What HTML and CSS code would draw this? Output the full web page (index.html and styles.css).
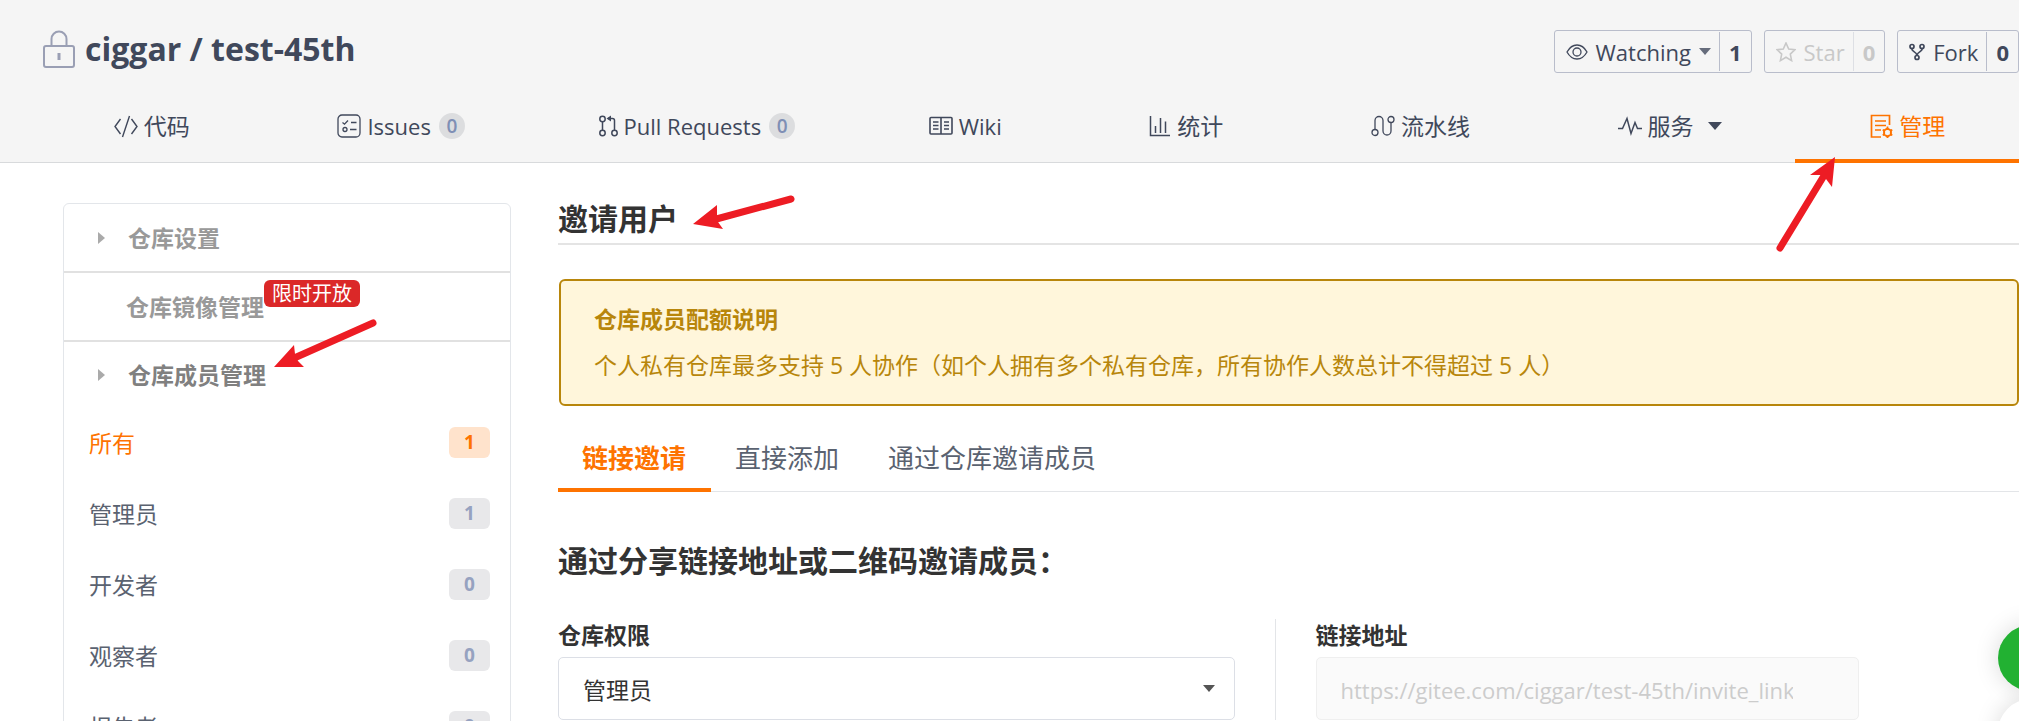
FILE: index.html
```html
<!DOCTYPE html>
<html lang="zh-CN">
<head>
<meta charset="utf-8">
<title>ciggar / test-45th</title>
<link rel="stylesheet" href="styles.css">
</head>
<body>
<header class="header">
  <div class="repo">
    <h1 class="repo-title">
      <svg class="lock" viewBox="0 0 32 38" fill="none" stroke="currentColor" stroke-width="2"><rect x="1" y="16" width="30" height="21" rx="2"/><path d="M8.500 16V9a7.500 7.500 0 0 1 15 0v7"/><path d="M16 23v7" stroke-width="3"/></svg>
      <span>ciggar / test-45th</span>
    </h1>
    <div class="actions">
      <div class="action">
        <button class="action-main" type="button">
          <svg class="icon-eye" viewBox="0 0 22 16" fill="none" stroke="currentColor" stroke-width="1.300"><path d="M1 8c2.500-4.500 6-7 10-7s7.500 2.500 10 7c-2.500 4.500-6 7-10 7S3.500 12.500 1 8z"/><circle cx="11" cy="8" r="4"/></svg>
          <span>Watching</span><i class="caret caret-soft"></i>
        </button>
        <a class="action-count" href="#">1</a>
      </div>
      <div class="action action-off">
        <button class="action-main" type="button" disabled>
          <svg class="icon-20" viewBox="0 0 20 20" fill="none" stroke="currentColor" stroke-width="1.600"><path d="M10 1l2.700 6 6.300.7-4.700 4.400 1.300 6.500L10 15.300l-5.600 3.300 1.300-6.500L1 7.700 7.300 7z"/></svg>
          <span>Star</span>
        </button>
        <a class="action-count" href="#">0</a>
      </div>
      <div class="action">
        <button class="action-main" type="button">
          <svg class="icon-fork" viewBox="0 0 16 18" fill="none" stroke="currentColor" stroke-width="1.700"><circle cx="3" cy="3.500" r="2"/><circle cx="13" cy="3.500" r="2"/><circle cx="8" cy="14.500" r="2"/><path d="M3 5.500v1c0 2 5 2.500 5 6M13 5.500v1c0 2-5 2.500-5 6"/></svg>
          <span>Fork</span>
        </button>
        <a class="action-count" href="#">0</a>
      </div>
    </div>
  </div>
  <nav class="nav">
    <a class="tab" href="#"><svg class="icon" viewBox="0 0 24 24" fill="none" stroke="currentColor" stroke-width="1.400"><path d="M6.500 5L1 12.500 6.500 20M17.500 5L23 12.500 17.500 20M15.500 2L8.500 23"/></svg><span>代码</span></a>
    <a class="tab tab-counted" href="#"><svg class="icon" viewBox="0 0 24 24" fill="none" stroke="currentColor" stroke-width="1.300"><rect x="1" y="1" width="22" height="22" rx="4"/><path d="M5.500 8.500l2 1.700L11 6.500M14 8.500h5.500M13 15.500h6.500"/><circle cx="8" cy="15.500" r="2"/></svg><span class="latin">Issues</span><b class="bubble">0</b></a>
    <a class="tab tab-counted" href="#"><svg class="icon-pr" viewBox="0 0 19 22" fill="none" stroke="currentColor" stroke-width="1.500"><circle cx="3.500" cy="4" r="2.700"/><circle cx="3.500" cy="18" r="2.700"/><circle cx="15.500" cy="18" r="2.700"/><path d="M3.500 7v8M9 3.500h4.500q2 0 2 2V15"/><path d="M12 .5v6L7.500 3.500z" fill="currentColor" stroke="none"/></svg><span class="latin">Pull Requests</span><b class="bubble">0</b></a>
    <a class="tab" href="#"><svg class="icon" viewBox="0 0 24 22" fill="none" stroke="currentColor" stroke-width="1.600"><rect x="1" y="2.500" width="22" height="16.500" rx="1"/><path d="M12 2.500V19M4 7h5.500M4 10.500h5.500M4 14h5.500M15 7h5M15 10.500h5M15 14h5"/></svg><span class="latin">Wiki</span></a>
    <a class="tab" href="#"><svg class="icon-22" viewBox="0 0 22 22" fill="none" stroke="currentColor" stroke-width="1.500"><path d="M1.500 1v19.500H21M6.500 18v-7M11.500 18V3M16.500 18V6.500"/></svg><span>统计</span></a>
    <a class="tab" href="#"><svg class="icon" viewBox="0 0 24 24" fill="none" stroke="currentColor" stroke-width="1.300"><circle cx="4" cy="18.500" r="3"/><circle cx="20" cy="5.500" r="3"/><path d="M4 15.500V6.500a4 4 0 0 1 8 0V17a4 4 0 0 0 8 0V8.500"/></svg><span>流水线</span></a>
    <a class="tab" href="#"><svg class="icon" viewBox="0 0 24 24" fill="none" stroke="currentColor" stroke-width="1.500"><path d="M0 14.500h4.500L9 4.500l4 15 4-11 2.500 6H24"/></svg><span>服务</span><i class="caret caret-nav"></i></a>
    <a class="tab tab-active" href="#"><svg class="icon" viewBox="0 0 24 24" fill="none" stroke="currentColor" stroke-width="1.700"><path d="M20.500 11V1.500h-18v21.500H12M6 7h11M6 11.500h11M6 16h6"/><path d="M18.500 14.500l3.400 2v4l-3.400 2-3.400-2v-4z" stroke-width="2"/><path d="M18.500 12.500v2M18.500 22.500v1.500M23.300 15.700l-1.400.8M13.700 15.700l1.400.8M23.300 21.300l-1.400-.8M13.700 21.300l1.400-.8"/></svg><span>管理</span></a>
  </nav>
</header>

<div class="page">
  <aside class="sidebar">
    <a class="group" href="#"><i class="chevron"></i><span>仓库设置</span></a>
    <a class="group group-plain" href="#"><span class="tagged">仓库镜像管理<em class="tag">限时开放</em></span></a>
    <a class="group group-open" href="#"><i class="chevron"></i><span>仓库成员管理</span></a>
    <a class="item item-active" href="#"><span>所有</span><b class="count">1</b></a>
    <a class="item" href="#"><span>管理员</span><b class="count">1</b></a>
    <a class="item" href="#"><span>开发者</span><b class="count">0</b></a>
    <a class="item" href="#"><span>观察者</span><b class="count">0</b></a>
    <a class="item" href="#"><span>报告者</span><b class="count">0</b></a>
  </aside>
  <main class="main">
    <h2 class="title">邀请用户</h2>
    <section class="notice">
      <h3 class="notice-title">仓库成员配额说明</h3>
      <p class="notice-text">个人私有仓库最多支持 5 人协作（如个人拥有多个私有仓库，所有协作人数总计不得超过 5 人）</p>
    </section>
    <nav class="subnav">
      <a class="subtab subtab-active" href="#">链接邀请</a>
      <a class="subtab" href="#">直接添加</a>
      <a class="subtab" href="#">通过仓库邀请成员</a>
    </nav>
    <h2 class="subtitle">通过分享链接地址或二维码邀请成员：</h2>
    <form class="form">
      <div class="field">
        <label class="label" for="role">仓库权限</label>
        <div class="select-wrap">
          <select class="control" id="role"><option>管理员</option><option>开发者</option><option>观察者</option><option>报告者</option></select>
        </div>
      </div>
      <div class="field field-link">
        <label class="label" for="link">链接地址</label>
        <input class="control control-off" id="link" type="text" value="https://gitee.com/ciggar/test-45th/invite_link" disabled>
      </div>
    </form>
  </main>
</div>

<div class="floating">
  <button class="float-btn float-green" type="button" aria-label="客服"></button>
  <button class="float-btn" type="button" aria-label="更多"></button>
</div>

<svg class="arrow arrow-nav" viewBox="0 0 64 98"><path class="shaft" d="M8 91L53 17"/><path class="head" d="M63 0L60 30L54 22L50 18L38 18Z"/></svg>
<svg class="arrow arrow-title" viewBox="0 0 104 42"><path class="shaft" d="M98 10L16 32"/><path class="head" d="M0 35L24 16V26L25 33L30 40Z"/></svg>
<svg class="arrow arrow-side" viewBox="0 0 106 54"><path class="shaft" d="M99 9L18 45"/><path class="head" d="M0 53L20 31L21 40L24 47L30 53Z"/></svg>
</body>
</html>
```
FILE: styles.css
```css
* { box-sizing: border-box; }
html { scrollbar-width: none; }
body {
  position: relative;
  margin: 0;
  background: #fff;
  color: #40485b;
  font: 23px/32px "Open Sans", "Noto Sans CJK SC", sans-serif;
  overflow-x: hidden;
}
a { color: inherit; text-decoration: none; }
h1, h2, h3, p { margin: 0; }
svg { flex: none; }

.header { background: #f5f5f5; border-bottom: 1px solid #d8dadc; }
.repo {
  display: flex;
  justify-content: space-between;
  align-items: flex-start;
  padding: 30px 0 0 43px;
}
.repo-title {
  display: flex;
  align-items: center;
  gap: 10px;
  font-size: 32px;
  line-height: 38px;
}
.lock { width: 32px; height: 38px; color: #9a9fb4; }

.actions { display: flex; gap: 12px; font-size: 22px; }
.action {
  display: flex;
  height: 43px;
  padding: 1px 0;
  border: 1px solid #b9bdcb;
  border-radius: 3px;
}
.action-main {
  display: flex;
  align-items: center;
  gap: 8px;
  padding: 0 8px 0 11px;
  border: 0;
  background: none;
  color: inherit;
  font: inherit;
}
.action-count {
  padding: 0 9px;
  border-left: 1px solid #b9bdcb;
  font-weight: 700;
  line-height: 41px;
}
.action-off { color: #c8c8c8; }
.action-off .action-count { border-color: #dddfe4; }
.icon-eye { width: 22px; height: 16px; }
.icon-20 { width: 20px; height: 20px; }
.icon-fork { width: 16px; height: 18px; }

.caret {
  border: solid transparent;
  border-width: 7px 6px 0;
  border-top-color: #40485b;
}
.caret-soft { border-top-color: #666c7c; }
.caret-nav { margin-left: 8px; border-width: 8px 7px 0; }

.nav { display: flex; height: 90px; padding-left: 40px; margin-bottom: -1px; }
.tab {
  display: flex;
  flex: 1 1 auto;
  align-items: center;
  justify-content: center;
  gap: 6px;
  padding: 20px 14px 0;
  border-bottom: 4px solid transparent;
  white-space: nowrap;
}
.tab-counted { padding-right: 0; }
.tab-active { color: #fe7300; border-color: #fe7300; }
.latin { font-size: 22px; }
.icon { width: 24px; height: 24px; }
.icon-22 { width: 22px; height: 22px; }
.icon-pr { width: 19px; height: 22px; }
.bubble {
  width: 26px;
  height: 26px;
  margin-left: 2px;
  border-radius: 50%;
  background: #dcdddf;
  color: #7f8fb5;
  font-size: 19px;
  font-weight: 600;
  line-height: 26px;
  text-align: center;
}

.page { display: flex; gap: 47px; padding: 40px 0 0 63px; }
.sidebar {
  flex: none;
  width: 448px;
  border: 1px solid #e3e6ea;
  border-radius: 6px;
}
.group {
  display: flex;
  align-items: center;
  height: 69px;
  padding-left: 34px;
  border-bottom: 2px solid #e1e1e1;
  color: #999;
  font-weight: 700;
}
.group-plain { padding-left: 62px; }
.group-open { height: 65px; border: 0; color: #808080; }
.chevron {
  margin-right: 23px;
  border: solid transparent;
  border-width: 6px 0 6px 7px;
  border-left-color: #aaa;
}
.tagged { position: relative; }
.tag {
  position: absolute;
  left: 100%;
  top: -11px;
  padding: 0 8px;
  border-radius: 6px;
  background: #db2828;
  color: #fff;
  font-size: 20px;
  font-style: normal;
  font-weight: 400;
  line-height: 27px;
  white-space: nowrap;
}
.item {
  display: flex;
  align-items: center;
  justify-content: space-between;
  height: 71px;
  padding: 0 20px 0 25px;
  color: #5a6270;
}
.count {
  width: 41px;
  border-radius: 6px;
  background: #e8e8ea;
  color: #96a2c0;
  font-size: 19px;
  line-height: 31px;
  text-align: center;
}
.item-active { color: #fe7300; }
.item-active .count { background: #ffe3cc; color: #fe7300; }

.main { flex: 1; min-width: 0; color: #333; }
.title {
  height: 42px;
  border-bottom: 2px solid #e4e4e4;
  font-size: 30px;
  line-height: 32px;
}
.notice {
  margin: 34px 0 0 1px;
  padding: 22px 33px 23px;
  border: 2px solid #b8860b;
  border-radius: 6px;
  background: #fff6db;
  color: #b8860b;
}
.notice-title { font-size: 23px; line-height: 32px; }
.notice-text { margin-top: 14px; }
.subnav { display: flex; margin-top: 16px; border-bottom: 1px solid #e3e5e8; }
.subtab {
  margin-bottom: -1px;
  padding: 20px 25px 14px 24px;
  border-bottom: 4px solid transparent;
  color: #5a6270;
  font-size: 26px;
}
.subtab-active { border-color: #fe7300; color: #fe7300; font-weight: 700; }
.subtitle { margin-top: 49px; font-size: 30px; line-height: 40px; }
.form { display: grid; grid-template-columns: 717fr 745fr; margin-top: 38px; }
.field { padding-right: 40px; }
.field-link { padding: 0 160px 0 40px; border-left: 1px solid #e3e5e8; }
.label { display: block; padding-bottom: 6px; font-weight: 700; }
.select-wrap { position: relative; }
.select-wrap::after {
  content: "";
  position: absolute;
  right: 20px;
  top: 28px;
  border: solid transparent;
  border-width: 7px 6px 0;
  border-top-color: #555;
  pointer-events: none;
}
.control {
  width: 100%;
  height: 63px;
  padding: 2px 24px 0;
  border: 1px solid #dcdfe6;
  border-radius: 5px;
  background: #fff;
  color: #333;
  font: inherit;
  appearance: none;
}
.control-off {
  padding-right: 65px;
  border-color: #efefef;
  background: #fafafa;
  color: #ccc;
  font-size: 22px;
}

.floating {
  position: fixed;
  left: calc(100% - 21px);
  top: 625px;
  display: grid;
  gap: 8px;
}
.float-btn {
  width: 66px;
  height: 66px;
  border: 0;
  border-radius: 50%;
  background: #fff;
  box-shadow: 0 0 24px rgba(0, 0, 0, .15);
}
.float-green { background: #22b132; }

.arrow { position: absolute; }
.shaft { fill: none; stroke: #ed1c24; stroke-width: 7px; stroke-linecap: round; }
.head { fill: #ed1c24; }
.arrow-nav { left: 1772px; top: 157px; width: 64px; }
.arrow-title { left: 693px; top: 189px; width: 104px; }
.arrow-side { left: 274px; top: 314px; width: 106px; }
```
